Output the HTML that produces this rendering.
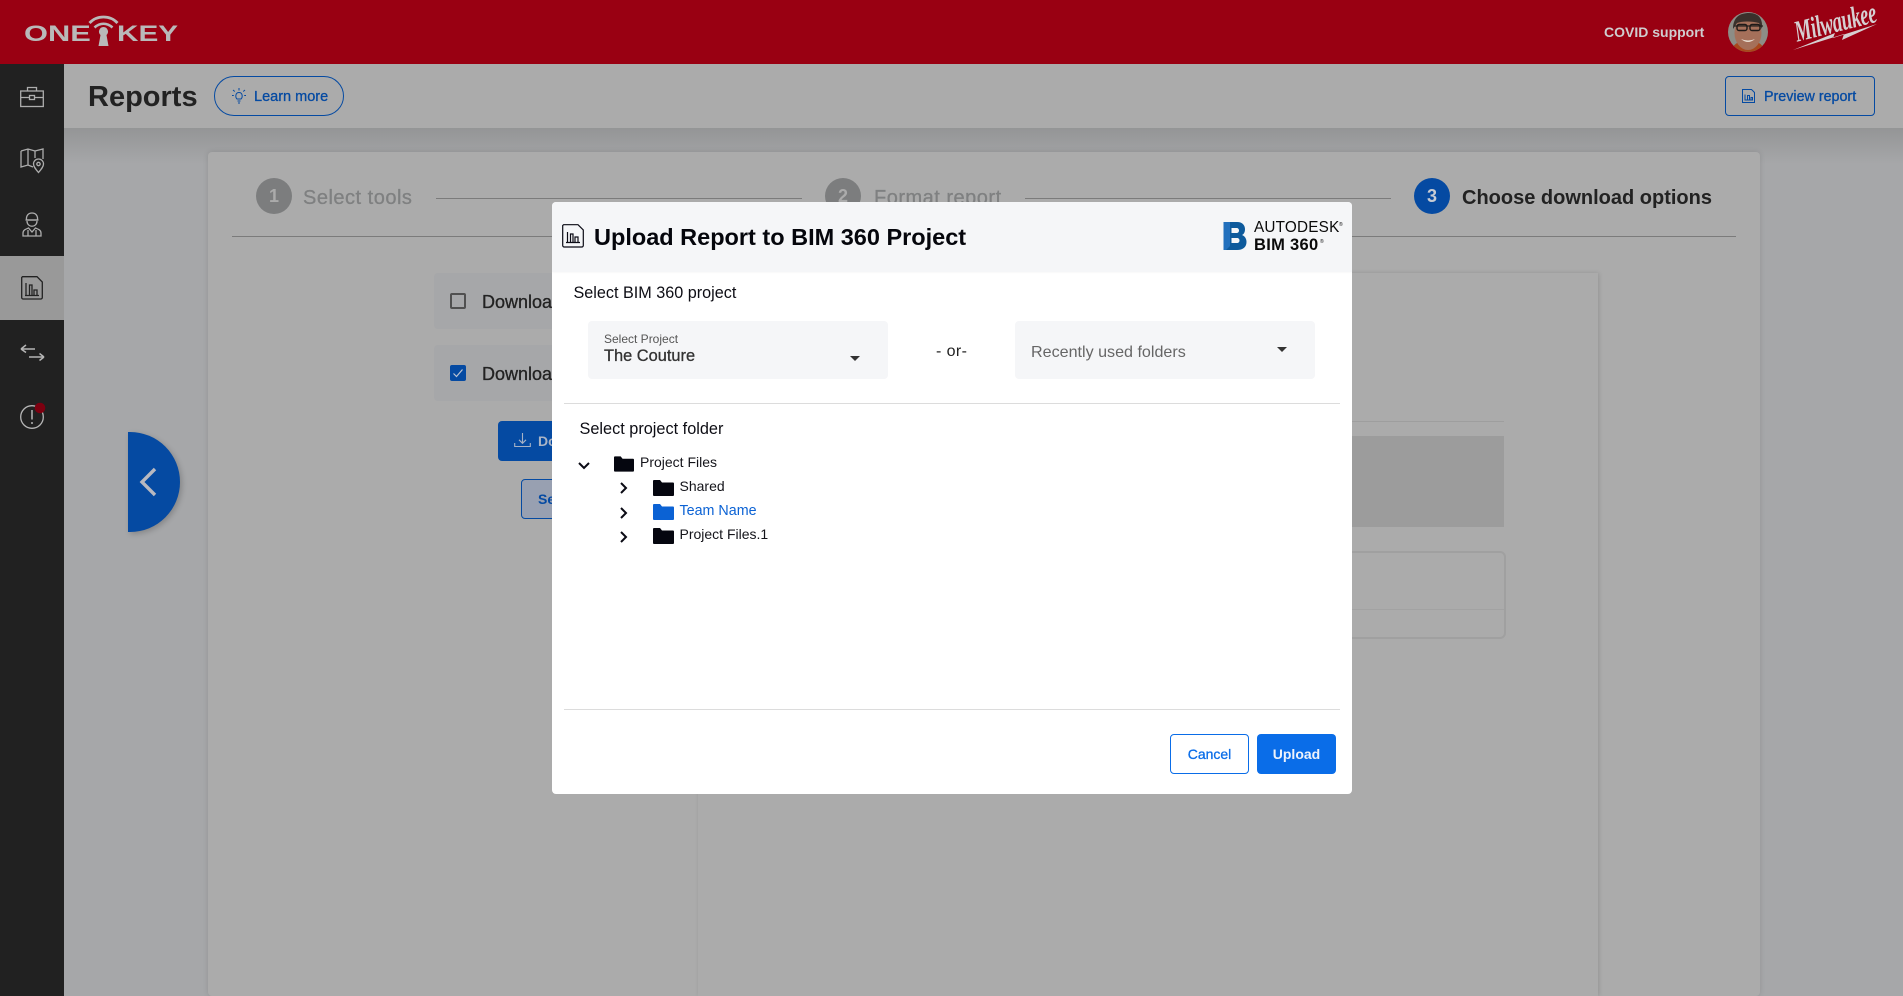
<!DOCTYPE html>
<html lang="en"><head><meta charset="utf-8"><title>Reports</title>
<style>
*{box-sizing:border-box}
html,body{margin:0;padding:0;width:1903px;height:996px;overflow:hidden;background:#a6a7a9;font-family:"Liberation Sans",sans-serif;color:#222}
.a{position:absolute}
.t{position:absolute;white-space:nowrap;line-height:20px}
svg{position:absolute;overflow:visible}
</style></head><body>
<!-- base page -->
<div class="a" style="left:64px;top:128px;width:1839px;height:868px;background:linear-gradient(#949596 0,#a6a7a9 36px)"></div>
<div class="a" style="left:0;top:0;width:1903px;height:64px;background:#990012"></div>
<div class="a" style="left:64px;top:64px;width:1839px;height:64px;background:#ababab"></div>
<div class="a" style="left:0;top:64px;width:64px;height:932px;background:#212121"></div>
<div class="a" style="left:0;top:256px;width:64px;height:64px;background:#999"></div>

<!-- ONE KEY logo -->
<div class="t" style="left:24px;top:21px;font-size:22px;line-height:26px;font-weight:700;color:#b9b9b9;transform-origin:0 50%;transform:scaleX(1.4)">ONE</div>
<div class="t" style="left:117px;top:21px;font-size:22px;line-height:26px;font-weight:700;color:#b9b9b9;transform-origin:0 50%;transform:scaleX(1.35)">KEY</div>
<svg style="left:88px;top:14px" width="32" height="34" viewBox="0 0 32 34" fill="none" stroke="#b9b9b9">
<path d="M1.5 9 C9 1 22 1 29.5 9" stroke-width="2.8"/><path d="M6.5 13.5 C12 8.5 19 8.5 24.5 13.5" stroke-width="2.6"/>
<path d="M15.5 13 a4.6 4.6 0 0 1 3 8 l2 11 h-10 l2 -11 a4.6 4.6 0 0 1 3 -8z" fill="#b9b9b9" stroke="none"/></svg>

<!-- top right -->
<div class="t" style="left:1604px;top:22px;font-size:14px;font-weight:700;color:#cfcdcf">COVID support</div>
<svg style="left:1728px;top:12px" width="40" height="40" viewBox="0 0 40 40">
<clipPath id="av"><circle cx="20" cy="20" r="20"/></clipPath>
<g clip-path="url(#av)"><rect width="40" height="40" fill="#8d8d86"/>
<path d="M3 40 C4 34 8 31 13 29 L27 29 C32 31 36 34 37 40z" fill="#a8481c"/>
<ellipse cx="20" cy="21" rx="13.500" ry="17" fill="#a5705a"/>
<path d="M5 17 C5 5 12 1 21 1 C31 1 35 7 34 17 L31 11 C24 9 14 9 9 11z" fill="#3a302b"/>
<path d="M6 14 H35" stroke="#2b2522" stroke-width="1.200"/><rect x="9" y="12.500" width="10" height="6" rx="2" fill="none" stroke="#1e1a18" stroke-width="1.400"/><rect x="22" y="12.500" width="10" height="6" rx="2" fill="none" stroke="#1e1a18" stroke-width="1.400"/>
<path d="M13 27 Q20 30 27 27 Q20 33 13 27z" fill="#e9dcd0"/></g></svg>
<div class="t" style="left:1795px;top:18px;font-size:30px;line-height:30px;font-weight:700;font-style:italic;font-family:'Liberation Serif',serif;color:#d6d0d2;transform-origin:0 50%;transform:rotate(-14deg) scaleX(.63);letter-spacing:-.5px">Milwaukee</div>
<svg style="left:1792px;top:22px" width="86" height="30" viewBox="0 0 86 30"><path d="M1 28 L43 11 L41 16 L85 2 L50 18 L52 12z" fill="#d6d0d2"/></svg>

<!-- sidebar icons -->
<svg style="left:20px;top:86px" width="24" height="22" viewBox="0 0 24 22" fill="none" stroke="#adadad" stroke-width="1.3"><rect x=".7" y="5" width="22.6" height="15.5"/><path d="M.7 11.5H9.5M14.5 11.5H23.3M7.5 5V1.5H16.5V5"/><rect x="9.5" y="9.5" width="5" height="4"/></svg>
<svg style="left:20px;top:148px" width="25" height="26" viewBox="0 0 25 26" fill="none" stroke="#adadad" stroke-width="1.3"><path d="M1 3 L8 1 L15 3 L23 1 V11 M1 3 V19 L8 17 L13 19 M8 1 V17 M15 3 V10"/><path d="M18.5 24.5 C15.5 21 13.5 18.5 13.5 16 a5 5 0 0 1 10 0 C23.5 18.5 21.5 21 18.5 24.5z"/><circle cx="18.5" cy="16" r="1.7"/></svg>
<svg style="left:22px;top:212px" width="20" height="26" viewBox="0 0 20 26" fill="none" stroke="#adadad" stroke-width="1.3"><path d="M4.5 8 C4 3.500 6.500 1 10 1 C13.500 1 16 3.500 15.500 8z"/><path d="M3.500 8H16.500"/><path d="M5 9 C5 16 15 16 15 9"/><path d="M1 24 V21 C1 18 4 17 6.500 16 L10 20 L13.500 16 C16 17 19 18 19 21 V24 H1zM6 24 V18 M14 24 V18"/></svg>
<svg style="left:21px;top:276px" width="22" height="24" viewBox="0 0 22 24" fill="none" stroke="#222" stroke-width="1.3"><path d="M1.500 .7 H16 L21.300 6 V21.500 a1.500 1.500 0 0 1 -1.500 1.500 H2.200 a1.500 1.500 0 0 1 -1.500 -1.500 V1.500z"/><path d="M5 19.500 V7 M4 19.500 H18 M8.500 19.500 V9 H11 V19.500 M13 19.500 V14 H16 V19.500"/></svg>
<svg style="left:20px;top:344px" width="25" height="18" viewBox="0 0 25 18" fill="none" stroke="#b5b5b5" stroke-width="1.500"><path d="M1 5 H15 M1 5 L6 1 M1 5 L6 8.500"/><path d="M9 13 H24 M24 13 L19.500 9.500 M24 13 L19.500 16.500"/></svg>
<svg style="left:20px;top:401px" width="26" height="28" viewBox="0 0 26 28" fill="none"><circle cx="12" cy="16" r="11.300" stroke="#b5b5b5" stroke-width="1.300"/><path d="M12 9 V18.500" stroke="#b5b5b5" stroke-width="1.500"/><circle cx="12" cy="22" r="1" fill="#b5b5b5"/><circle cx="20" cy="7" r="5.300" fill="#7d0010"/></svg>

<!-- sub header -->
<div class="t" style="left:88px;top:81px;font-size:29px;line-height:33px;font-weight:700;color:#222">Reports</div>
<div class="a" style="left:214px;top:76px;width:130px;height:40px;border:1px solid #054aa2;border-radius:20px"></div>
<svg style="left:232px;top:88px" width="14" height="16" viewBox="0 0 14 16" fill="none" stroke="#054aa2" stroke-width="1"><path d="M5 11 C3 9 3.500 4.500 7 4.500 C10.500 4.500 11 9 9 11z"/><path d="M5.500 13H8.500M6 15H8M7 0V2.500M1 2L2.800 3.500M13 2L11.200 3.500M0 7.500H1.800M14 7.500H12.200"/></svg>
<div class="t" style="left:254px;top:87px;font-size:14.500px;color:#054aa2;-webkit-text-stroke:.3px #054aa2">Learn more</div>
<div class="a" style="left:1725px;top:76px;width:150px;height:40px;border:1px solid #054aa2;border-radius:4px"></div>
<svg style="left:1742px;top:89px" width="13" height="14" viewBox="0 0 13 14" fill="none" stroke="#054aa2" stroke-width="1"><path d="M.5 .5H9.500L12.500 3.500V13.500H.5z"/><path d="M3 11V5.500M5.500 11V6.500H7.500V11M9 11V8.500H10.500V11M2.500 11H11"/></svg>
<div class="t" style="left:1764px;top:87px;font-size:14.300px;color:#054aa2;-webkit-text-stroke:.3px #054aa2">Preview report</div>

<!-- collapse tab -->
<div class="a" style="left:128px;top:432px;width:52px;height:100px;background:#054aa2;border-radius:0 50px 50px 0;box-shadow:2px 2px 6px rgba(0,0,0,.2)"></div>
<svg style="left:137px;top:466px" width="22" height="32" viewBox="0 0 22 32" fill="none"><path d="M18 3 L5 16 L18 29" stroke="#b9b9c0" stroke-width="3.400"/></svg>

<!-- main card -->
<div class="a" style="left:208px;top:152px;width:1552px;height:844px;background:#ababab;border-radius:4px;box-shadow:0 0 6px rgba(0,0,0,.12)"></div>
<div class="a" style="left:256px;top:178px;width:36px;height:36px;border-radius:50%;background:#7c7d7e;color:#ababab;font:700 18px/36px 'Liberation Sans',sans-serif;text-align:center">1</div>
<div class="t" style="left:303px;top:187px;font-size:20px;line-height:23px;letter-spacing:.5px;color:#7f8081;-webkit-text-stroke:.3px #7f8081">Select tools</div>
<div class="a" style="left:436px;top:198px;width:366px;height:1px;background:#7b7b7b"></div>
<div class="a" style="left:825px;top:178px;width:36px;height:36px;border-radius:50%;background:#7c7d7e;color:#ababab;font:700 18px/36px 'Liberation Sans',sans-serif;text-align:center">2</div>
<div class="t" style="left:874px;top:187px;font-size:20px;line-height:23px;letter-spacing:.5px;color:#7f8081;-webkit-text-stroke:.3px #7f8081">Format report</div>
<div class="a" style="left:1025px;top:198px;width:366px;height:1px;background:#7b7b7b"></div>
<div class="a" style="left:1414px;top:178px;width:36px;height:36px;border-radius:50%;background:#054aa2;color:#c8ccd4;font:700 18px/36px 'Liberation Sans',sans-serif;text-align:center">3</div>
<div class="t" style="left:1462px;top:186px;font-size:20px;line-height:23px;font-weight:700;color:#222;padding-top:1px">Choose download options</div>
<div class="a" style="left:232px;top:236px;width:1504px;height:1px;background:#7b7b7b"></div>

<!-- left options -->
<div class="a" style="left:434px;top:273px;width:200px;height:56px;background:#a6a7a9;border-radius:4px"></div>
<div class="a" style="left:434px;top:345px;width:200px;height:56px;background:#a6a7a9;border-radius:4px"></div>
<div class="a" style="left:450px;top:293px;width:16px;height:16px;border:2px solid #505050;border-radius:2px"></div>
<div class="a" style="left:450px;top:365px;width:16px;height:16px;background:#054aa2;border-radius:2px"></div>
<svg style="left:450px;top:365px" width="16" height="16" viewBox="0 0 16 16" fill="none"><path d="M3.500 8.500 L6.500 11.500 L12.500 4.500" stroke="#bcc4d2" stroke-width="1.200"/></svg>
<div class="t" style="left:482px;top:292px;font-size:18px;color:#222;-webkit-text-stroke:.3px #222">Download</div>
<div class="t" style="left:482px;top:364px;font-size:18px;color:#222;-webkit-text-stroke:.3px #222">Download</div>
<div class="a" style="left:498px;top:421px;width:120px;height:40px;background:#054aa2;border-radius:4px"></div>
<svg style="left:514px;top:433px" width="17" height="15" viewBox="0 0 17 15" fill="none" stroke="#a6b2c6" stroke-width="1.100"><path d="M8.500 0V10M5 6.800L8.500 10.300L12 6.800M.7 10V13.500H16.300V10"/></svg>
<div class="t" style="left:538px;top:431px;font-size:14px;font-weight:700;color:#aab4c6">Download</div>
<div class="a" style="left:521px;top:479px;width:120px;height:40px;background:#98a0b1;border:1px solid #054aa2;border-radius:4px"></div>
<div class="t" style="left:538px;top:489px;font-size:14px;font-weight:700;color:#054aa2">Select</div>

<!-- inner panel -->
<div class="a" style="left:698px;top:273px;width:900px;height:723px;background:#ababab;box-shadow:1px 0 4px rgba(0,0,0,.13)"></div>
<div class="a" style="left:698px;top:421px;width:806px;height:1px;background:#9e9e9e"></div>
<div class="a" style="left:698px;top:436px;width:806px;height:91px;background:#9c9c9c"></div>
<div class="a" style="left:698px;top:551px;width:808px;height:88px;border:2px solid #a0a0a0;border-radius:6px"></div>
<div class="a" style="left:698px;top:609px;width:806px;height:1px;background:#a2a2a2"></div>

<!-- modal -->
<div class="a" style="left:552px;top:202px;width:800px;height:592px;background:#fff;border-radius:4px;overflow:hidden">
<div class="a" style="left:0;top:0;width:800px;height:70px;background:#f5f6f8;box-shadow:0 0 2px rgba(0,0,0,.06)"></div>
</div>
<svg style="left:562px;top:224px" width="22" height="24" viewBox="0 0 22 24" fill="none" stroke="#0a0a14" stroke-width="1.200"><path d="M1.600 .7H16L21.300 6V21.500A1.500 1.500 0 0 1 19.800 23H2.200A1.500 1.500 0 0 1 .7 21.500V1.500z"/><path d="M5.500 18.500V8M4 18.500H18M8.500 18.500V10H11V18.500M13 18.500V13H16V18.500"/></svg>
<div class="t" style="left:594px;top:224px;font-size:23.500px;line-height:26px;font-weight:700;color:#05060c">Upload Report to BIM 360 Project</div>

<svg style="left:1223px;top:221px" width="24" height="30" viewBox="0 0 24 30"><path d="M.5 1H7V29H.5z" fill="#2270bd"/><path d="M7 1H14C20 1 22 5 22 8C22 11 21 13 19 14C22 15 23.500 18 23.500 21C23.500 26 20 29 14 29H3L7 25z" fill="#0d5a9c"/><path d="M8.500 7H13.500C15 7 16 8 16 9.500C16 11 15 12 13.500 12H8.500zM8.500 17H14C15.500 17 16.500 18 16.500 19.500C16.500 21 15.500 22 14 22H8.500z" fill="#f5f6f8"/></svg>
<div class="t" style="left:1254px;top:218px;font-size:15.300px;letter-spacing:.2px;color:#0a0a0a">AUTODESK</div>
<div class="t" style="left:1254px;top:235px;font-size:16.500px;font-weight:700;letter-spacing:.3px;color:#0a0a0a">BIM 360</div>
<div class="t" style="left:1339px;top:221px;font-size:5px;line-height:8px;color:#0a0a0a">®</div>
<div class="t" style="left:1320px;top:238px;font-size:5px;line-height:8px;color:#0a0a0a">®</div>

<div class="t" style="left:573.500px;top:283px;font-size:16.200px;color:#0d0d14">Select BIM 360 project</div>
<div class="a" style="left:588px;top:321px;width:300px;height:58px;background:#f5f6f8;border-radius:4px"></div>
<div class="t" style="left:604px;top:329px;font-size:12px;color:#555">Select Project</div>
<div class="t" style="left:604px;top:346px;font-size:16.400px;color:#333;-webkit-text-stroke:.3px #333">The Couture</div>
<svg style="left:850px;top:356px" width="10" height="5"><path d="M0 0H10L5 5z" fill="#333"/></svg>
<div class="t" style="left:936px;top:342px;font-size:16px;letter-spacing:.4px;color:#222">- or-</div>
<div class="a" style="left:1015px;top:321px;width:300px;height:58px;background:#f5f6f8;border-radius:4px"></div>
<div class="t" style="left:1031px;top:342px;font-size:16.100px;color:#666">Recently used folders</div>
<svg style="left:1277px;top:347px" width="10" height="5"><path d="M0 0H10L5 5z" fill="#333"/></svg>
<div class="a" style="left:564px;top:403px;width:776px;height:1px;background:#dcdcdc"></div>

<div class="t" style="left:579.500px;top:419px;font-size:16.300px;color:#0d0d14">Select project folder</div>
<svg style="left:578px;top:462px" width="12" height="8" fill="none"><path d="M1 1L6 6L11 1" stroke="#0a0a14" stroke-width="2"/></svg>
<svg style="left:614px;top:456px" width="20" height="16" viewBox="0 0 21 16"><path d="M0 1A1 1 0 0 1 1 0H7L9 2.500H20A1 1 0 0 1 21 3.500V15A1 1 0 0 1 20 16H1A1 1 0 0 1 0 15z" fill="#05060f"/></svg>
<div class="t" style="left:640px;top:452px;font-size:14px;color:#14141a">Project Files</div>
<svg style="left:620px;top:482px" width="8" height="12" fill="none"><path d="M1 1L6 6L1 11" stroke="#0a0a14" stroke-width="2"/></svg>
<svg style="left:653px;top:480px" width="21" height="16" viewBox="0 0 21 16"><path d="M0 1A1 1 0 0 1 1 0H7L9 2.500H20A1 1 0 0 1 21 3.500V15A1 1 0 0 1 20 16H1A1 1 0 0 1 0 15z" fill="#05060f"/></svg>
<div class="t" style="left:679.500px;top:476px;font-size:14px;color:#14141a">Shared</div>
<svg style="left:620px;top:507px" width="8" height="12" fill="none"><path d="M1 1L6 6L1 11" stroke="#0a0a14" stroke-width="2"/></svg>
<svg style="left:653px;top:504px" width="21" height="16" viewBox="0 0 21 16"><path d="M0 1A1 1 0 0 1 1 0H7L9 2.500H20A1 1 0 0 1 21 3.500V15A1 1 0 0 1 20 16H1A1 1 0 0 1 0 15z" fill="#0b62d4"/></svg>
<div class="t" style="left:679.500px;top:501px;font-size:14.300px;color:#0b62d4">Team Name</div>
<svg style="left:620px;top:531px" width="8" height="12" fill="none"><path d="M1 1L6 6L1 11" stroke="#0a0a14" stroke-width="2"/></svg>
<svg style="left:653px;top:528px" width="21" height="16" viewBox="0 0 21 16"><path d="M0 1A1 1 0 0 1 1 0H7L9 2.500H20A1 1 0 0 1 21 3.500V15A1 1 0 0 1 20 16H1A1 1 0 0 1 0 15z" fill="#05060f"/></svg>
<div class="t" style="left:679.500px;top:524px;font-size:14px;color:#14141a">Project Files.1</div>

<div class="a" style="left:564px;top:709px;width:776px;height:1px;background:#dcdcdc"></div>
<div class="a" style="left:1170px;top:734px;width:79px;height:40px;border:1px solid #0a6de8;border-radius:4px;font-size:14px;line-height:38px;text-align:center;color:#0a6de8;-webkit-text-stroke:.3px #0a6de8">Cancel</div>
<div class="a" style="left:1257px;top:734px;width:79px;height:40px;background:#0a6de8;border-radius:4px;font-size:14px;font-weight:700;line-height:40px;text-align:center;color:#eef3fb">Upload</div>
</body></html>
